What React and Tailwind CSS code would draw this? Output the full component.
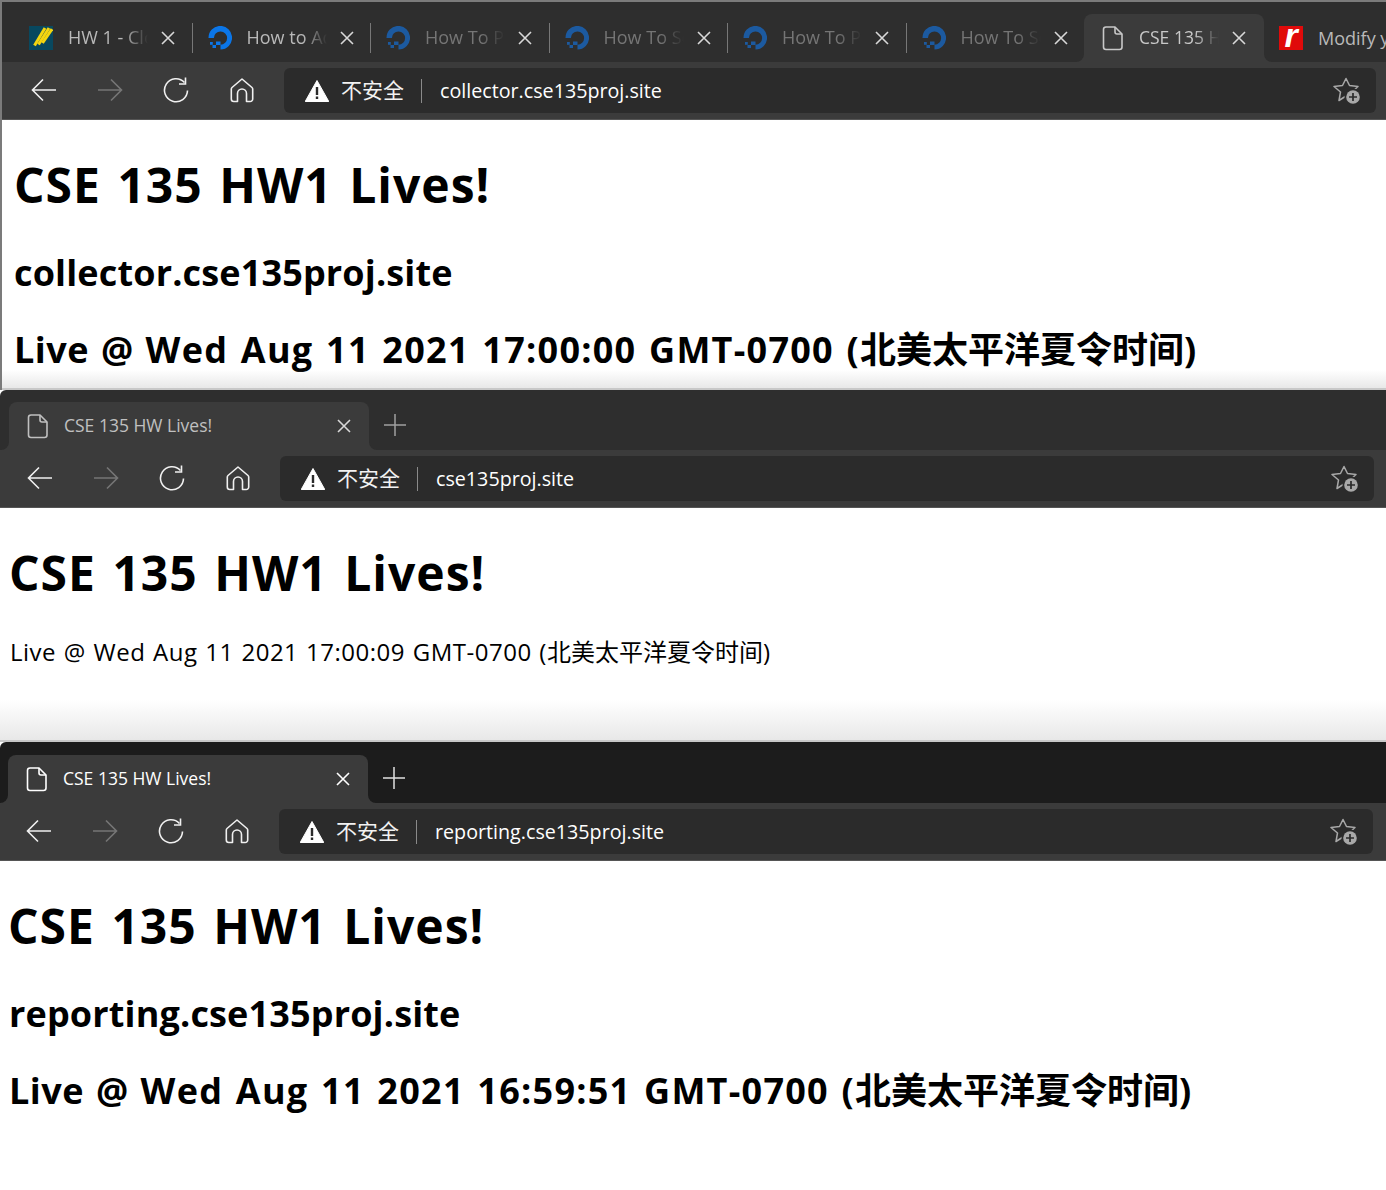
import React from 'react';

const SANS = 'font-["Open_Sans","Noto_Sans_CJK_SC",sans-serif]';

const FileIcon = ({ color = '#d0d0d0' }) => (
  <svg width="22" height="26" viewBox="0 0 22 26" fill="none" stroke={color} strokeWidth="1.6" strokeLinejoin="round">
    <path d="M4 2h9l7 7v13a2.5 2.5 0 0 1-2.500 2.500H4A2.500 2.500 0 0 1 1.500 22V4.500A2.500 2.500 0 0 1 4 2z" />
    <path d="M13 2v5a2 2 0 0 0 2 2h5" />
  </svg>
);

const CloseIcon = ({ color = '#d8d8d8' }) => (
  <svg width="14" height="14" viewBox="0 0 14 14" stroke={color} strokeWidth="1.6">
    <path d="M1 1l12 12M13 1L1 13" />
  </svg>
);

const OceanIcon = ({ dim }) => (
  <svg width="24" height="24" viewBox="0 0 24 24" fill={dim ? '#1c5aa0' : '#0b76e8'} className="shrink-0">
    <path d="M12.500 23.500v-4.800a6.600 6.600 0 1 0-6.600-6.700H0.500A11.800 11.800 0 1 1 12.500 23.500z" />
    <rect x="8" y="15.500" width="4.500" height="3.500" />
    <rect x="4.500" y="19" width="3.500" height="3" />
    <rect x="2" y="16" width="2.800" height="2.800" />
  </svg>
);

const StripesIcon = () => (
  <svg width="24" height="24" viewBox="0 0 24 24" className="shrink-0">
    <rect width="24" height="24" fill="#08485f" />
    <g stroke="#f4d50f" strokeWidth="3">
      <path d="M5.500 19.500L16 2" />
      <path d="M9.500 18.500L20 2" />
      <path d="M13.500 17L23 3" />
    </g>
  </svg>
);

const RIcon = () => (
  <div className="w-6 h-6 shrink-0 bg-[#e00a0a] flex items-center justify-center overflow-hidden">
    <span className='text-white italic font-bold text-[34px] leading-none font-["Liberation_Sans",sans-serif] -mt-[6px]'>r</span>
  </div>
);

const Tab = ({ icon, title, dim, divider = true }) => (
  <div className="relative w-[178.500px] h-12 shrink-0 flex items-center pl-[15px]">
    {icon}
    <span className={`absolute left-[54px] top-[11px] w-[80px] overflow-hidden whitespace-nowrap text-[18px] leading-[24px] [mask-image:linear-gradient(to_right,black_70%,transparent)] ${dim ? 'text-[#757575]' : 'text-[#b9b9b9]'}`}>
      {title}
    </span>
    <span className="absolute left-[147px] top-[17px]"><CloseIcon /></span>
    {divider && <span className="absolute right-0 top-[9px] w-px h-[30px] bg-[#777777]" />}
  </div>
);

const ActiveTab = ({ title, width, titleColor, close, fade, stripBg }) => (
  <div className={`relative h-12 shrink-0 rounded-t-lg flex items-center pl-[18px] bg-[#3b3b3b] ${width}`}>
    <FileIcon color={titleColor} />
    <span
      className={`absolute left-[55px] top-[11px] overflow-hidden whitespace-nowrap text-[17.500px] leading-[24px] ${fade ? 'w-[80px] [mask-image:linear-gradient(to_right,black_70%,transparent)]' : ''}`}
      style={{ color: titleColor }}
    >
      {title}
    </span>
    <span className="absolute right-[18px] top-[17px]"><CloseIcon color={close} /></span>
    <span className="absolute -left-2 bottom-0 w-2 h-2 bg-[#3b3b3b]"><span className={`block w-2 h-2 rounded-br-lg ${stripBg}`} /></span>
    <span className="absolute -right-2 bottom-0 w-2 h-2 bg-[#3b3b3b]"><span className={`block w-2 h-2 rounded-bl-lg ${stripBg}`} /></span>
  </div>
);

const NavIcons = () => (
  <div className="flex items-center h-[43px]">
    <div className="w-[66px] flex justify-center">
      <svg width="26" height="24" viewBox="0 0 26 24" fill="none" stroke="#f0f0f0" strokeWidth="1.600">
        <path d="M25 12H1.500M12 1.500L1.500 12 12 22.500" />
      </svg>
    </div>
    <div className="w-[66px] flex justify-center">
      <svg width="26" height="24" viewBox="0 0 26 24" fill="none" stroke="#767676" strokeWidth="1.600">
        <path d="M1 12h23.500M14 1.500L24.500 12 14 22.500" />
      </svg>
    </div>
    <div className="w-[66px] flex justify-center">
      <svg width="26" height="26" viewBox="0 0 26 26" fill="none" stroke="#f0f0f0" strokeWidth="1.600">
        <path d="M21.500 5.500A11.500 11.500 0 1 0 24.500 13.500" />
        <path d="M22.500 0.500V7h-6.500" />
      </svg>
    </div>
    <div className="w-[66px] flex justify-center">
      <svg width="24" height="26" viewBox="0 0 24 26" fill="none" stroke="#f0f0f0" strokeWidth="1.600" strokeLinejoin="round">
        <path d="M12 2L2 10.500a2 2 0 0 0-.7 1.500v10a2.500 2.500 0 0 0 2.500 2.500h3.700v-8a4.500 4.500 0 0 1 9 0v8h3.700a2.500 2.500 0 0 0 2.500-2.500V12a2 2 0 0 0-.7-1.500z" />
      </svg>
    </div>
  </div>
);

const WarnIcon = () => (
  <svg width="24" height="22" viewBox="0 0 24 22">
    <path d="M12 0.500L23.800 21.500H0.200z" fill="#ffffff" stroke="#ffffff" strokeLinejoin="round" />
    <rect x="10.800" y="7" width="2.400" height="8" fill="#2b2b2b" />
    <rect x="10.800" y="16.500" width="2.400" height="2.500" fill="#2b2b2b" />
  </svg>
);

const StarAdd = () => (
  <svg width="27" height="27" viewBox="0 0 27 27" fill="none">
    <path d="M13 1.500l3.500 7 8.500 1-6 5.500 1.500 8-7.500-4-7 4.500 1.500-8.500L1 9.500l8.500-1z" stroke="#a8a8a8" strokeWidth="1.500" strokeLinejoin="round" />
    <circle cx="20" cy="20" r="8.500" fill="#2b2b2b" />
    <circle cx="20" cy="20" r="6.800" fill="#a8a8a8" />
    <path d="M20 16v8M16 20h8" stroke="#2b2b2b" strokeWidth="1.700" />
  </svg>
);

const Toolbar = ({ url, navPad, barRight }) => (
  <div className={`h-[58px] shrink-0 bg-[#3b3b3b] flex items-start pt-[6px] border-b border-[#555555] ${navPad} ${barRight}`}>
    <NavIcons />
    <div className="ml-[9px] flex-1 h-[45px] rounded-md bg-[#2b2b2b] flex items-center pl-[21px] pr-[16px]">
      <WarnIcon />
      <span className="ml-[12px] text-[21px] leading-none text-[#f2f2f2]">不安全</span>
      <span className="ml-[17px] w-px h-6 bg-[#8a8a8a]" />
      <span className="ml-[18px] text-[19.700px] leading-none text-white">{url}</span>
      <span className="ml-auto flex"><StarAdd /></span>
    </div>
  </div>
);

const H1 = ({ pad }) => (
  <h1 className={`text-[48px] leading-[65px] font-bold text-black whitespace-nowrap tracking-[1px] [word-spacing:3px] ${pad}`}>CSE 135 HW1 Lives!</h1>
);

// latin part of the date line is spaced out, the CJK part is not
const LiveLine = ({ stamp }) => (
  <h2 className="mt-[28px] text-[36px] leading-[49px] font-bold text-black whitespace-nowrap">
    <span className="tracking-[0.5px] [word-spacing:2px]">Live @ </span>
    <span className="tracking-[1.26px] [word-spacing:2px]">Wed Aug 11 2021 {stamp} GMT-0700 (</span>北美太平洋夏令时间)
  </h2>
);

export default function App() {
  return (
    <div className={`w-[1386px] h-[1190px] overflow-hidden bg-white ${SANS}`}>
      {/* top window, whole tab row */}
      <section className="h-[390px] flex flex-col border-l-2 border-t-2 border-[#7b7b7b]">
        <div className="h-[60px] shrink-0 bg-[#2e2e2e] flex items-end pl-3">
          <Tab icon={<StripesIcon />} title="HW 1 - Cloud Set" />
          <Tab icon={<OceanIcon />} title="How to Add" />
          <Tab icon={<OceanIcon dim />} title="How To Point" dim />
          <Tab icon={<OceanIcon dim />} title="How To Set" dim />
          <Tab icon={<OceanIcon dim />} title="How To Point" dim />
          <Tab icon={<OceanIcon dim />} title="How To Set" dim divider={false} />
          <ActiveTab title="CSE 135 HW" width="w-[180px] -ml-px" titleColor="#c8c8c8" close="#d8d8d8" fade stripBg="bg-[#2e2e2e]" />
          <div className="relative h-12 flex-1 flex items-center pl-[15px]">
            <RIcon />
            <span className="ml-[15px] text-[18px] leading-none text-[#b9b9b9] whitespace-nowrap">Modify y</span>
          </div>
        </div>
        <Toolbar url="collector.cse135proj.site" navPad="pl-[9px]" barRight="pr-[10px]" />
        <div className="relative flex-1 min-h-0 flex flex-col bg-white pl-[12px] pt-[32px]">
          <H1 />
          <h2 className="mt-[31px] text-[36px] leading-[49px] font-bold text-black whitespace-nowrap tracking-[0.15px]">collector.cse135proj.site</h2>
          <LiveLine stamp="17:00:00" />
          <div className="absolute left-0 right-0 bottom-0 h-[20px] bg-gradient-to-b from-white/0 to-[#e8e8e8] border-b-2 border-[#c8c8c8]" />
        </div>
      </section>

      <section className="h-[352px] flex flex-col">
        <div className="h-[60px] shrink-0 bg-[#2e2e2e] flex items-end pl-[9px] rounded-tl-md">
          <ActiveTab title="CSE 135 HW Lives!" width="w-[360px]" titleColor="#c0c0c0" close="#d8d8d8" stripBg="bg-[#2e2e2e]" />
          <svg className="ml-[15px] mb-[14px]" width="22" height="22" viewBox="0 0 22 22" stroke="#a0a0a0" strokeWidth="1.500">
            <path d="M11 0v22M0 11h22" />
          </svg>
        </div>
        <Toolbar url="cse135proj.site" navPad="pl-[7px]" barRight="pr-[12px]" />
        <div className="flex-1 min-h-0 flex flex-col bg-white pl-[10px] pt-[32px]">
          <H1 pad="-ml-px" />
          <p className="mt-[30px] text-[24px] leading-[33px] text-black whitespace-nowrap">
            <span className="tracking-[0.5px] [word-spacing:1px]">Live @ Wed Aug 11 2021 17:00:09 GMT-0700 (</span>北美太平洋夏令时间)
          </p>
          <div className="-ml-[10px] mt-auto h-[42px] shrink-0 bg-gradient-to-b from-white to-[#e8e8e8] border-b-2 border-[#c8c8c8]" />
        </div>
      </section>

      <section className="flex flex-col">
        <div className="h-[61px] shrink-0 bg-[#1c1c1c] flex items-end pl-2 rounded-tl-md">
          <ActiveTab title="CSE 135 HW Lives!" width="w-[360px]" titleColor="#ffffff" close="#ffffff" stripBg="bg-[#1c1c1c]" />
          <svg className="ml-[15px] mb-[14px]" width="22" height="22" viewBox="0 0 22 22" stroke="#e0e0e0" strokeWidth="1.500">
            <path d="M11 0v22M0 11h22" />
          </svg>
        </div>
        <Toolbar url="reporting.cse135proj.site" navPad="pl-[6px]" barRight="pr-[13px]" />
        <div className="flex flex-col bg-white pl-[9px] pt-[32px]">
          <H1 pad="-ml-px" />
          <h2 className="mt-[31px] text-[36px] leading-[49px] font-bold text-black whitespace-nowrap tracking-[0.15px]">reporting.cse135proj.site</h2>
          <LiveLine stamp="16:59:51" />
        </div>
      </section>
    </div>
  );
}
